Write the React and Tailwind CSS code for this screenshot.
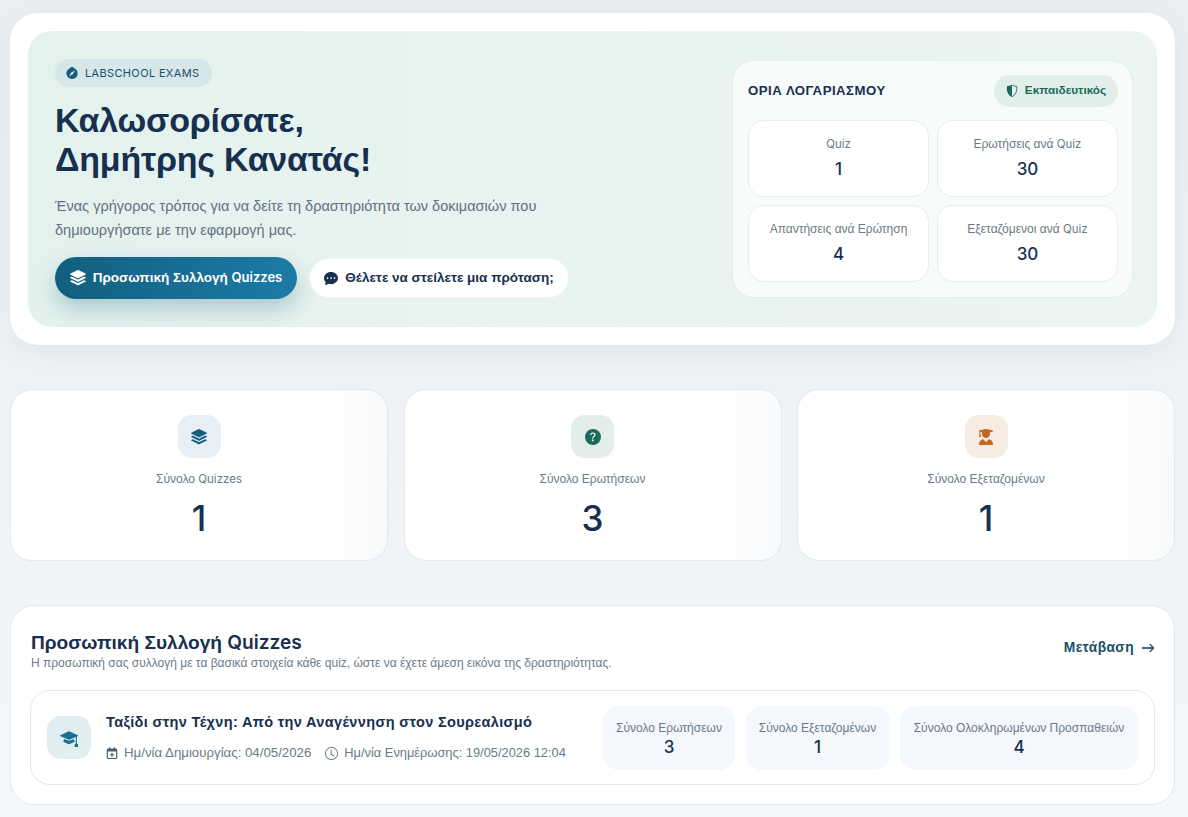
import React from 'react';
import { BsStack, BsCompassFill, BsChatDotsFill, BsShieldShaded, BsQuestionCircleFill, BsMortarboardFill, BsClock, BsArrowRight } from 'react-icons/bs';
import { FaUserGraduate, FaRegCalendarPlus } from 'react-icons/fa6';

const limits = [
    { label: <span className="font-['Inter',sans-serif] text-[11.5px]">Quiz</span>, value: 1 },
    { label: <>Ερωτήσεις ανά <span className="font-['Inter',sans-serif] text-[11.5px]">Quiz</span></>, value: 30 },
    { label: 'Απαντήσεις ανά Ερώτηση', value: 4 },
    { label: <>Εξεταζόμενοι ανά <span className="font-['Inter',sans-serif] text-[11.5px]">Quiz</span></>, value: 30 },
];

const stats = [
    { label: <>Σύνολο <span className="font-['Inter',sans-serif] text-[11.5px]">Quizzes</span></>, value: 1, icon: <BsStack className="text-[16px] text-[#155e7f]" />, box: 'bg-[#e7eff4]' },
    { label: 'Σύνολο Ερωτήσεων', value: 3, icon: <BsQuestionCircleFill className="text-[16px] text-[#1b6b5a]" />, box: 'bg-[#e3eeeb]' },
    { label: 'Σύνολο Εξεταζομένων', value: 1, icon: <FaUserGraduate className="text-[16px] text-[#c26a25]" />, box: 'bg-[#f6ece2]' },
];

const chips = [
    { label: 'Σύνολο Ερωτήσεων', value: 3, width: 'w-[132px]' },
    { label: 'Σύνολο Εξεταζομένων', value: 1, width: 'w-[144px]' },
    { label: 'Σύνολο Ολοκληρωμένων Προσπαθειών', value: 4, width: 'w-[238px]' },
];

const App = () => {
    return (
        <div className="h-[817px] overflow-hidden bg-gradient-to-b from-[#e9eef3] to-[#f4f7fa] pl-[10px] pr-[13px] pt-[13px] font-['Liberation_Sans',sans-serif] text-[#17304f]">

            {/* Hero */}
            <div className="rounded-[28px] bg-white p-[18px] shadow-[0_8px_24px_rgba(30,60,90,0.06)]">
                <div className="flex h-[296px] items-start justify-between rounded-[24px] bg-gradient-to-r from-[#e4f2ee] to-[#ebf5f2] pb-[29px] pl-[27px] pr-[24px] pt-[28px]">
                    <div className="flex w-[530px] flex-col items-start">
                        <div className="flex h-[28px] w-[157px] items-center gap-[7px] rounded-full bg-[#d5e7e8] pl-[11px] text-[11px] tracking-[0.35px] text-[#1c4f68]">
                            <BsCompassFill className="text-[12px] text-[#155e7f]" />
                            <span className="font-['Inter',sans-serif]">LABSCHOOL EXAMS</span>
                        </div>
                        <h1 className="mt-[14px] text-[34px] font-bold leading-[39px] tracking-[-0.2px] text-[#17304f]">
                            Καλωσορίσατε,<br />Δημήτρης Κανατάς!
                        </h1>
                        <p className="mt-[15px] w-[500px] text-[14.55px] leading-[24px] text-[#62717f]">
                            Ένας γρήγορος τρόπος για να δείτε τη δραστηριότητα των δοκιμασιών που δημιουργήσατε με την εφαρμογή μας.
                        </p>
                        <div className="mt-[15px] flex items-center gap-[12px]">
                            <button className="flex h-[42px] w-[242px] items-center justify-center gap-[7px] rounded-full bg-gradient-to-r from-[#125f7f] to-[#1c7ba6] text-[13.5px] font-bold text-white shadow-[0_10px_22px_rgba(18,95,127,0.28)]">
                                <BsStack className="text-[16px]" />
                                <span>Προσωπική Συλλογή <span className="font-['Inter',sans-serif] text-[13px] font-semibold">Quizzes</span></span>
                            </button>
                            <button className="flex h-[40px] w-[260px] items-center justify-center gap-[7px] rounded-full border border-[#f1f6f5] bg-white text-[13.5px] font-bold text-[#17304f]">
                                <BsChatDotsFill className="text-[14px]" />
                                Θέλετε να στείλετε μια πρόταση;
                            </button>
                        </div>
                    </div>

                    {/* Account limits */}
                    <div className="mt-[2px] -translate-y-px h-[238px] w-[401px] rounded-[22px] border border-[#e4eeeb] bg-[#f7fbfa] pl-[15px] pr-[14px] pt-[14px]">
                        <div className="flex items-center justify-between">
                            <span className="text-[13.2px] font-bold tracking-[0.5px] text-[#17304f]">ΟΡΙΑ ΛΟΓΑΡΙΑΣΜΟΥ</span>
                            <span className="flex h-[32px] w-[124px] items-center justify-center gap-[7px] rounded-full bg-[#e2eeea] text-[11.8px] font-bold text-[#1b6b5a]">
                                <BsShieldShaded className="text-[12px]" />
                                Εκπαιδευτικός
                            </span>
                        </div>
                        <div className="mt-[13px] grid grid-cols-2 gap-[8px]">
                            {limits.map((item, index) => (
                                <div key={index} className="flex h-[77px] flex-col items-center rounded-[16px] border border-[#e6eeec] bg-white pt-[15px]">
                                    <div className="text-[12px] leading-[16px] text-[#6b7a88]">{item.label}</div>
                                    <div className="mt-[7px] font-['Inter',sans-serif] text-[17px] font-medium leading-[20px] text-[#17304f]">{item.value}</div>
                                </div>
                            ))}
                        </div>
                    </div>
                </div>
            </div>

            {/* Stat cards */}
            <div className="mt-[44px] grid grid-cols-3 gap-[15.5px]">
                {stats.map((item, index) => (
                    <div key={index} className="flex h-[172px] flex-col items-center rounded-[22px] border border-[#e2e8ee] bg-gradient-to-r from-white from-80% to-[#f8fafc] pt-[25px]">
                        <div className={`flex h-[43px] w-[43px] items-center justify-center rounded-[14px] ${item.box}`}>
                            {item.icon}
                        </div>
                        <div className="mt-[13px] text-[12px] leading-[16px] text-[#6b7a88]">{item.label}</div>
                        <div className="mt-[10px] font-['Inter',sans-serif] text-[35px] font-[550] leading-[42px] text-[#17304f]">{item.value}</div>
                    </div>
                ))}
            </div>

            {/* Personal collection */}
            <div className="mt-[44px] h-[200px] rounded-[24px] border border-[#e4e9ee] bg-white px-[19px] pt-[25px]">
                <div className="flex items-start justify-between">
                    <div className="pl-px">
                        <h2 className="text-[19.1px] font-bold leading-[22px] text-[#17304f]">
                            Προσωπική Συλλογή <span className="font-['Inter',sans-serif] font-semibold">Quizzes</span>
                        </h2>
                        <p className="mt-[2px] text-[12px] leading-[15px] text-[#6b7a88]">
                            Η προσωπική σας συλλογή με τα βασικά στοιχεία κάθε quiz, ώστε να έχετε άμεση εικόνα της δραστηριότητας.
                        </p>
                    </div>
                    <a className="flex items-center gap-[7px] pt-[7px] text-[13.8px] font-bold tracking-[0.4px] text-[#1c4f68]">
                        Μετάβαση <BsArrowRight className="text-[14px] [stroke-width:0.8] stroke-current" />
                    </a>
                </div>

                <div className="mt-[19px] flex h-[95px] items-center justify-between rounded-[20px] border border-[#e2e8ee] bg-white pl-[16px] pr-[16px]">
                    <div className="flex items-center gap-[15px]">
                        <div className="flex h-[43px] w-[44px] items-center justify-center rounded-[14px] bg-gradient-to-br from-[#dfecf3] to-[#e2f0ec]">
                            <BsMortarboardFill className="text-[18px] text-[#1a6f94]" />
                        </div>
                        <div>
                            <div className="-translate-y-px text-[14.5px] font-bold leading-[18px] tracking-[0.35px] text-[#17304f]">Ταξίδι στην Τέχνη: Από την Αναγέννηση στον Σουρεαλισμό</div>
                            <div className="mt-[13px] flex items-center gap-[14px] leading-[16px] text-[#6b7a88]">
                                <span className="flex items-center gap-[6px] text-[13.25px]"><FaRegCalendarPlus className="text-[12px] text-[#4d5d6c]" />Ημ/νία Δημιουργίας: 04/05/2026</span>
                                <span className="flex items-center gap-[6px] text-[12.85px]"><BsClock className="text-[13px] text-[#4d5d6c]" />Ημ/νία Ενημέρωσης: 19/05/2026 12:04</span>
                            </div>
                        </div>
                    </div>
                    <div className="flex items-center gap-[10.5px]">
                        {chips.map((item, index) => (
                            <div key={index} className={`flex h-[64px] flex-col items-center justify-center rounded-[16px] bg-[#f4f7fb] pt-[2px] ${item.width}`}>
                                <div className="whitespace-nowrap text-[12px] leading-[16px] text-[#6b7a88]">{item.label}</div>
                                <div className="mt-[1px] font-['Inter',sans-serif] text-[17px] font-medium leading-[20px] text-[#17304f]">{item.value}</div>
                            </div>
                        ))}
                    </div>
                </div>
            </div>
        </div>
    );
};

export default App;
